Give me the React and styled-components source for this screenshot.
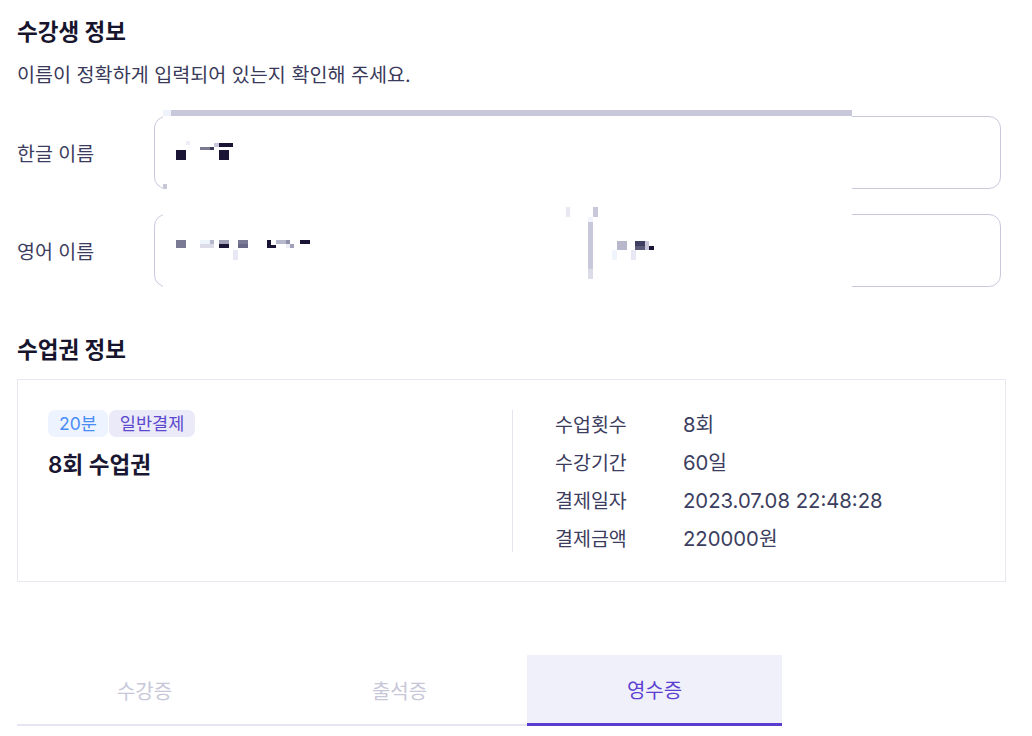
import React from 'react';
import styled, { createGlobalStyle } from 'styled-components';

const GlobalStyle = createGlobalStyle`
  body {
    margin: 0;
    background: #ffffff;
    font-family: Inter, "Noto Sans CJK KR", sans-serif;
    color: #3c3c5e;
  }
`;

const Page = styled.div`
  width: 989px;
  padding: 18px 0 0 17px;
`;

const SectionTitle = styled.h2`
  margin: 0;
  font-size: 22.5px;
  line-height: 28px;
  font-weight: 700;
  color: #17142d;
`;

const Guide = styled.p`
  margin: 16px 0 0;
  font-size: 19.6px;
  line-height: 26px;
  color: #3a3a5a;
`;

const Form = styled.div`
  position: relative;
  margin-top: 28px;
  display: flex;
  flex-direction: column;
  gap: 25px;
`;

const Row = styled.div`
  display: flex;
  align-items: center;
`;

const Label = styled.label`
  width: 137px;
  flex: none;
  font-size: 19.5px;
  color: #3c3c5e;
`;

const Input = styled.div`
  width: 847px;
  height: 73px;
  box-sizing: border-box;
  border: 1px solid #c9c9dd;
  border-radius: 12px;
`;

const Mask = styled.svg`
  position: absolute;
  left: 146px;
  top: -6px;
  display: block;
`;

const TicketTitle = styled(SectionTitle)`
  margin-top: 49px;
`;

const Card = styled.div`
  margin-top: 15px;
  border: 1px solid #e8e8f2;
  padding: 30px 30px 29px;
  display: flex;
`;

const Summary = styled.div`
  width: 464px;
  flex: none;
`;

const Badges = styled.div`
  display: flex;
  gap: 1px;
`;

const Badge = styled.span`
  height: 27px;
  line-height: 27px;
  padding: 0 11px;
  border-radius: 7px;
  font-size: 17.5px;
  background: ${p => (p.tone === 'blue' ? '#eef4ff' : '#ebeaf8')};
  color: ${p => (p.tone === 'blue' ? '#4a8cf7' : '#5b48cf')};
`;

const TicketName = styled.div`
  margin-top: 14px;
  font-size: 22.5px;
  line-height: 28px;
  font-weight: 600;
  color: #1a1733;
`;

const Details = styled.dl`
  margin: 0;
  padding-left: 42px;
  border-left: 1px solid #e6e6f0;
  display: grid;
  grid-template-columns: 128px auto;
  row-gap: 12px;
  align-content: start;
  height: 142px;
  box-sizing: border-box;
  padding-top: 2px;
`;

const Term = styled.dt`
  font-size: 19.5px;
  line-height: 26px;
  color: #3c3c5e;
`;

const Value = styled.dd`
  margin: 0;
  font-size: 20.3px;
  line-height: 26px;
  color: #3c3e60;
`;

const Tabs = styled.div`
  margin-top: 73px;
  display: flex;
`;

const Tab = styled.button`
  width: 255px;
  height: 71px;
  border: 0;
  border-bottom: ${p => (p.active ? '3px solid #5a3ccf' : '2px solid #e6e6f3')};
  background: ${p => (p.active ? '#f0f0fa' : 'transparent')};
  color: ${p => (p.active ? '#5b3fd1' : '#c7c7d9')};
  font-family: Inter, "Noto Sans CJK KR", sans-serif;
  font-size: 20px;
  padding: ${p => (p.active ? '0' : '1px 0 0')};
  cursor: pointer;
`;

const maskBlocks = [
  [163, 110, 8, 6, '#eef2fb'], [171, 110, 681, 6, '#c8c8da'],
  [163, 184, 4, 5, '#c8c8da'],
  [176, 150, 10, 10, '#1a1535'], [186, 141, 4, 4, '#eeeef8'],
  [200, 147, 10, 3, '#7a7a90'], [210, 147, 4, 3, '#3a3a58'],
  [214, 143, 5, 4, '#c8c8da'], [219, 143, 14, 4, '#1a1535'],
  [219, 150, 10, 10, '#1a1535'],
  [176, 240, 10, 8, '#7a7a95'],
  [200, 240, 10, 4, '#eef4fc'], [210, 240, 4, 4, '#b8b8cc'], [200, 244, 14, 4, '#dcdce8'],
  [219, 240, 10, 4, '#a0a0b8'], [219, 244, 10, 4, '#1a1535'],
  [233, 250, 5, 10, '#e8e8f4'],
  [238, 240, 10, 4, '#7a7a95'], [238, 244, 10, 4, '#6a6a88'],
  [267, 240, 4, 8, '#1a1535'], [271, 245, 5, 3, '#1a1535'],
  [276, 240, 10, 4, '#b8b8cc'], [286, 240, 4, 4, '#9090a8'], [286, 244, 4, 4, '#eeeef8'],
  [290, 244, 4, 4, '#a0a0b8'], [300, 240, 10, 4, '#1a1535'],
  [566, 207, 4, 10, '#e8e8f4'], [593, 207, 5, 10, '#c8c8da'],
  [588, 217, 5, 5, '#f0f4fc'], [588, 222, 5, 47, '#c8c8da'], [588, 269, 5, 10, '#dcdce8'],
  [617, 241, 10, 9, '#b8b8cc'], [635, 241, 10, 5, '#3f3f62'], [635, 246, 10, 4, '#5a5a78'],
  [645, 241, 4, 9, '#c8c8da'], [649, 246, 5, 4, '#1a1535'],
  [612, 250, 5, 10, '#f0f4fc'], [631, 250, 5, 10, '#e8e8f4'],
];

const details = [
  ['수업횟수', '8회'],
  ['수강기간', '60일'],
  ['결제일자', '2023.07.08 22:48:28'],
  ['결제금액', '220000원'],
];

export default function App() {
  return (
    <Page>
      <GlobalStyle />
      <SectionTitle>수강생 정보</SectionTitle>
      <Guide>이름이 정확하게 입력되어 있는지 확인해 주세요.</Guide>
      <Form>
        <Row>
          <Label>한글 이름</Label>
          <Input />
        </Row>
        <Row>
          <Label>영어 이름</Label>
          <Input />
        </Row>
        <Mask width="689" height="182" viewBox="163 110 689 182">
          <rect x="163" y="110" width="689" height="182" fill="#ffffff" />
          {maskBlocks.map(([x, y, w, h, c], i) => (
            <rect key={i} x={x} y={y} width={w} height={h} fill={c} />
          ))}
        </Mask>
      </Form>

      <TicketTitle>수업권 정보</TicketTitle>
      <Card>
        <Summary>
          <Badges>
            <Badge tone="blue">20분</Badge>
            <Badge>일반결제</Badge>
          </Badges>
          <TicketName>8회 수업권</TicketName>
        </Summary>
        <Details>
          {details.map(([k, v]) => (
            <React.Fragment key={k}>
              <Term>{k}</Term>
              <Value>{v}</Value>
            </React.Fragment>
          ))}
        </Details>
      </Card>

      <Tabs>
        <Tab>수강증</Tab>
        <Tab>출석증</Tab>
        <Tab active>영수증</Tab>
      </Tabs>
    </Page>
  );
}
